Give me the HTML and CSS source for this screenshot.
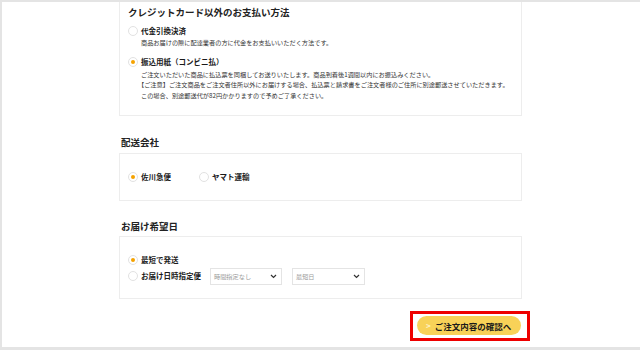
FILE: index.html
```html
<!DOCTYPE html>
<html lang="ja">
<head>
<meta charset="utf-8">
<link rel="stylesheet" href="styles.css">
</head>
<body>
<div class="frame">
  <div class="column">
    <section class="card card-pay">
      <h2 class="card-title">クレジットカード以外のお支払い方法</h2>
      <div class="option">
        <div class="opt-row"><span class="radio"></span><span class="opt-label">代金引換決済</span></div>
        <p class="desc">商品お届けの際に配達業者の方に代金をお支払いいただく方法です。</p>
      </div>
      <div class="option option-2">
        <div class="opt-row"><span class="radio on"></span><span class="opt-label">振込用紙（コンビニ払）</span></div>
        <p class="desc">ご注文いただいた商品に払込票を同梱してお送りいたします。商品到着後1週間以内にお振込みください。<br><span class="notice">【ご注意】ご注文商品をご注文者住所以外にお届けする場合、払込票と請求書をご注文者様のご住所に別途郵送させていただきます。</span><br>この場合、別途郵送代が82円かかりますので予めご了承ください。</p>
      </div>
    </section>

    <h3 class="sec-title sec-ship">配送会社</h3>
    <section class="card card-ship">
      <div class="ship-row">
        <div class="opt-row ship-item"><span class="radio on"></span><span class="opt-label">佐川急便</span></div>
        <div class="opt-row ship-item"><span class="radio"></span><span class="opt-label">ヤマト運輸</span></div>
      </div>
    </section>

    <h3 class="sec-title sec-date">お届け希望日</h3>
    <section class="card card-date">
      <div class="opt-row"><span class="radio on"></span><span class="opt-label">最短で発送</span></div>
      <div class="opt-row date-row"><span class="radio"></span><span class="opt-label date-label">お届け日時指定便</span>
        <div class="select sel-1"><span class="sel-text">時間指定なし</span><span class="sel-arrow"><svg width="7" height="5" viewBox="0 0 7 5"><path d="M1 1 L3.5 3.5 L6 1" fill="none" stroke="#333" stroke-width="1.2"/></svg></span></div>
        <div class="select sel-2"><span class="sel-text">最短日</span><span class="sel-arrow"><svg width="7" height="5" viewBox="0 0 7 5"><path d="M1 1 L3.5 3.5 L6 1" fill="none" stroke="#333" stroke-width="1.2"/></svg></span></div>
      </div>
    </section>

    <div class="actions">
      <span class="highlight"><button class="confirm" type="button"><span class="chev">&gt;</span>ご注文内容の確認へ</button></span>
    </div>
  </div>
</div>
</body>
</html>
```

FILE: styles.css
```css
* { box-sizing: border-box; }
html, body { margin: 0; padding: 0; background: #fff; }
body {
  font-family: "Noto Sans CJK JP", "Noto Sans", sans-serif;
  color: #222;
  width: 640px;
  height: 350px;
  overflow: hidden;
}
.frame {
  width: 640px;
  height: 350px;
  border-top: 2px solid #e4e4e4;
  border-left: 2px solid #e4e4e4;
  border-bottom: 3px solid #e4e4e4;
  overflow: hidden;
}
.column {
  width: 403px;
  margin: 0 0 0 117px;
}
.card {
  border: 1px solid #ededed;
  background: #fff;
}
.card-pay {
  border-top: none;
  padding: 3px 8px 14px 8px;
  height: 114px;
}
.card-title {
  margin: 0;
  font-size: 9.5px;
  line-height: 14px;
  font-weight: 700;
  color: #222;
}
.option { margin-top: 6px; }
.option-2 { margin-top: 7px; }
.opt-row {
  display: flex;
  align-items: center;
  height: 12px;
}
.radio {
  width: 10px;
  height: 10px;
  border-radius: 50%;
  border: 1px solid #e2e2e2;
  background: #fff;
  margin-right: 3px;
  display: flex;
  align-items: center;
  justify-content: center;
  flex: none;
}
.radio.on::after {
  content: "";
  width: 4px;
  height: 4px;
  border-radius: 50%;
  background: #f5a200;
}
.opt-label {
  font-size: 7.5px;
  font-weight: 700;
  line-height: 12px;
  color: #1a1a1a;
}
.desc {
  margin: 1px 0 0 13px;
  font-size: 6.2px;
  line-height: 10.5px;
  color: #333;
  white-space: nowrap;
}
.option-2 .desc { margin-top: 2px; }
.notice { margin-left: -3px; }
.sec-title {
  margin: 0;
  font-size: 9.5px;
  line-height: 14px;
  font-weight: 700;
  color: #222;
  padding-left: 2px;
}
.sec-ship { margin-top: 19px; }
.card-ship {
  margin-top: 4px;
  height: 48px;
  padding: 0 8px;
  display: flex;
  align-items: center;
}
.ship-row { display: flex; }
.ship-item { width: 71px; }
.sec-date { margin-top: 18px; }
.card-date {
  margin-top: 3px;
  height: 63px;
  padding: 17px 8px 0 8px;
}
.date-row { margin-top: 4px; }
.date-label { width: 69px; }
.select {
  width: 72px;
  height: 17px;
  border: 1px solid #e4e4e4;
  display: flex;
  align-items: center;
  justify-content: space-between;
  padding: 0 4px 0 3px;
  background: #fff;
}
.sel-2 { margin-left: 10px; width: 73px; }
.sel-text {
  font-size: 6.2px;
  color: #9a9a9a;
}
.sel-arrow { display: flex; align-items: center; }
.actions {
  display: flex;
  justify-content: flex-end;
  margin-top: 12px;
  margin-right: -8px;
}
.highlight {
  display: inline-flex;
  border: 3px solid #ee0000;
  padding: 2px 6px 3px 4px;
}
.confirm {
  width: 104px;
  height: 19px;
  border: none;
  border-radius: 10px;
  background: #f8d258;
  font-family: "Noto Sans CJK JP", sans-serif;
  font-size: 8.5px;
  font-weight: 700;
  color: #1a1a1a;
  display: flex;
  align-items: center;
  padding: 0 0 0 9px;
  cursor: pointer;
}
.chev {
  color: #fff3c4;
  font-weight: 700;
  margin-right: 4px;
  font-size: 8px;
}
```
